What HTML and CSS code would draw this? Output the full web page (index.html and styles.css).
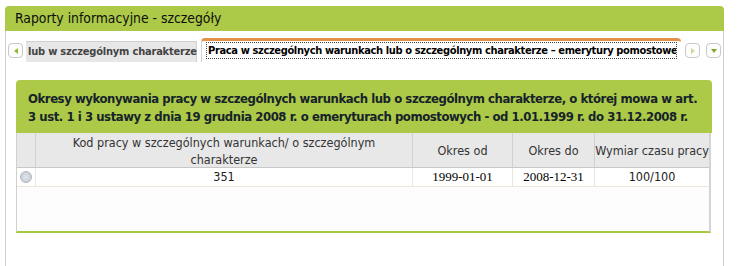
FILE: index.html
```html
<!DOCTYPE html>
<html lang="pl">
<head>
<meta charset="utf-8">
<title>Raporty informacyjne - szczegóły</title>
<link rel="stylesheet" href="styles.css">
</head>
<body>
<div class="panel">
  <div class="panel-head">Raporty informacyjne - szczegóły</div>
  <div class="panel-body">
    <div class="tabs">
      <span class="nav-btn nav-left"><svg width="8" height="8" viewBox="0 0 8 8"><path d="M6 1 L2 4 L6 7 Z" fill="#8dbb2f"/></svg></span>
      <div class="tab tab-inactive">lub w szczególnym charakterze</div>
      <div class="tab tab-active"><span class="tab-focus">Praca w szczególnych warunkach lub o szczególnym charakterze – emerytury pomostowe</span></div>
      <span class="nav-btn nav-right"><svg width="8" height="8" viewBox="0 0 8 8"><path d="M2 1 L6 4 L2 7 Z" fill="#c8dc9a"/></svg></span>
      <span class="nav-btn nav-down"><svg width="8" height="8" viewBox="0 0 8 8"><path d="M1 2 L7 2 L4 6 Z" fill="#7fa82a"/></svg></span>
    </div>
    <div class="section">
      <div class="section-head">Okresy wykonywania pracy w szczególnych warunkach lub o szczególnym charakterze, o której mowa w art. 3 ust. 1 i 3 ustawy z dnia 19 grudnia 2008 r. o emeryturach pomostowych - od 1.01.1999 r. do 31.12.2008 r.</div>
      <div class="grid">
        <div class="row row-head">
          <div class="cell c-radio"></div>
          <div class="cell c-kod">Kod pracy w szczególnych warunkach/ o szczególnym charakterze</div>
          <div class="cell c-od">Okres od</div>
          <div class="cell c-do">Okres do</div>
          <div class="cell c-wym">Wymiar czasu pracy</div>
        </div>
        <div class="row row-data">
          <div class="cell c-radio"><span class="radio"></span></div>
          <div class="cell c-kod">351</div>
          <div class="cell c-od date">1999-01-01</div>
          <div class="cell c-do date">2008-12-31</div>
          <div class="cell c-wym">100/100</div>
        </div>
        <div class="grid-empty"></div>
      </div>
    </div>
  </div>
</div>
</body>
</html>
```
FILE: styles.css
```css
html, body {
  margin: 0;
  padding: 0;
  background: #ffffff;
  height: 100%;
  overflow: hidden;
}
body {
  font-family: "DejaVu Sans Condensed", "DejaVu Sans", Verdana, sans-serif;
  color: #1a1a1a;
}
.panel {
  margin: 6px 14px 0 5px;
  height: 260px;
  overflow: hidden;
}
.panel-head {
  background: #acc947;
  height: 25px;
  line-height: 24px;
  border-radius: 4px 4px 0 0;
  padding-left: 10px;
  font-size: 13.8px;
  color: #0d0d0d;
}
.panel-body {
  border-left: 1px solid #cfcfcf;
  border-right: 1px solid #cfcfcf;
  height: 235px;
}
.tabs {
  display: flex;
  align-items: flex-start;
  padding-top: 7px;
  height: 24px;
}
.nav-btn {
  box-sizing: border-box;
  width: 15px;
  height: 15px;
  border: 1px solid #c9c9c9;
  border-radius: 4px;
  background: #fdfdfd;
  display: flex;
  align-items: center;
  justify-content: center;
  flex: none;
}
.nav-left {
  margin: 5px 0 0 2px;
}
.nav-right {
  margin: 5px 0 0 4px;
}
.nav-down {
  margin: 5px 0 0 6px;
}
.tab {
  box-sizing: border-box;
  font-weight: bold;
  font-size: 11px;
  letter-spacing: -0.2px;
  white-space: nowrap;
  flex: none;
}
.tab-inactive {
  margin: 3px 0 0 3px;
  width: 171px;
  height: 21px;
  line-height: 20px;
  background: #e7e7e7;
  border: 1px solid #d0d0d0;
  border-bottom: none;
  border-left: none;
  padding-left: 2px;
  color: #444;
}
.tab-active {
  margin-left: 4px;
  width: 480px;
  height: 24px;
  border-top: 3px solid #e2914a;
  border-left: 1px solid #d6d6d6;
  border-radius: 4px 4px 0 0;
  padding: 1px 0 0 4px;
  background: #fff;
  color: #000;
  letter-spacing: -0.36px;
}
.tab-focus {
  display: inline-block;
  border: 1px dotted #444;
  padding: 0 1px;
  height: 17px;
  line-height: 16px;
  width: 471px;
  box-sizing: border-box;
  overflow: hidden;
}
.section {
  margin: 18px 0 0 10px;
  width: 696px;
}
.section-head {
  background: #acc947;
  border-radius: 4px 4px 0 0;
  padding: 10px 4px 7px 12px;
  font-weight: bold;
  font-size: 13px;
  line-height: 18px;
  letter-spacing: -0.45px;
  color: #16232a;
}
.grid {
  border-left: 1px solid #d0d0d0;
  border-right: 2px solid #d4d4d4;
  border-bottom: 2px solid #a8c83f;
  margin-right: 1px;
}
.row {
  display: flex;
}
.cell {
  box-sizing: border-box;
  text-align: center;
}
.row-head {
  background: #e8e8e8;
  height: 35px;
  color: #333;
  font-size: 12.5px;
}
.row-head .cell {
  border-right: 1px solid #d0d0d0;
  border-bottom: 1px solid #c8c8c8;
  padding-top: 1px;
  line-height: 17px;
}
.row-head .c-kod {
  padding-left: 26px;
  padding-right: 26px;
}
.row-head .c-od, .row-head .c-do, .row-head .c-wym {
  display: flex;
  align-items: center;
  justify-content: center;
  padding-top: 0;
  white-space: nowrap;
}
.row-head .c-wym { border-right: none; }
.c-radio { width: 19px; flex: none; }
.c-kod { width: 377px; flex: none; }
.c-od { width: 100px; flex: none; }
.c-do { width: 82px; flex: none; }
.c-wym { flex: 1; }
.row-data {
  height: 19px;
  background: #fff;
  font-size: 12.5px;
  color: #222;
}
.row-data .cell {
  border-right: 1px solid #efe6da;
  border-bottom: 1px solid #efe6da;
  line-height: 18px;
}
.row-data .c-wym { border-right: none; }
.row-data .c-radio {
  display: flex;
  align-items: center;
  justify-content: center;
}
.date {
  font-family: "Liberation Serif", "Times New Roman", serif;
  font-size: 13px;
  color: #000;
}
.radio {
  box-sizing: border-box;
  width: 12px;
  height: 12px;
  border-radius: 50%;
  border: 1px solid #b4b4b4;
  background: radial-gradient(circle at 50% 50%, #e0e6ee 0, #c8d0da 70%);
}
.grid-empty {
  height: 44px;
  background: #fdfdfd;
}
```
